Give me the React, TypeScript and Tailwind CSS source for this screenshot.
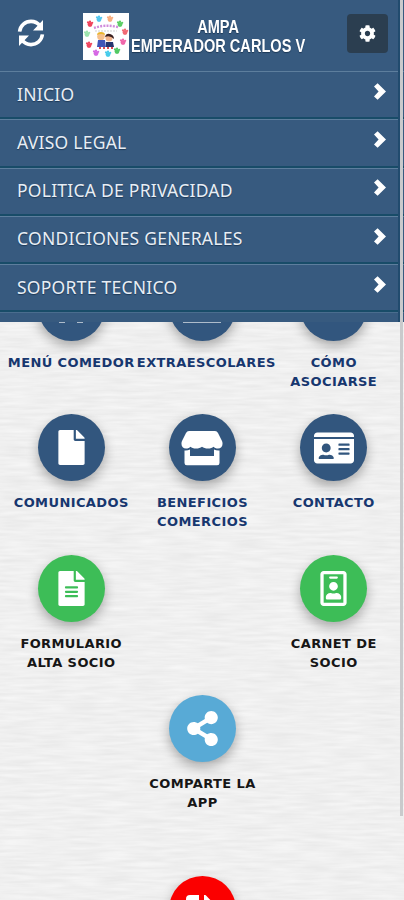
import type { ReactNode } from 'react';
import { FaFile, FaFileAlt, FaIdCard, FaRegIdBadge, FaShareAlt, FaCog } from 'react-icons/fa';

const menuItems = [
  'INICIO',
  'AVISO LEGAL',
  'POLITICA DE PRIVACIDAD',
  'CONDICIONES GENERALES',
  'SOPORTE TECNICO',
];

const hands = [
  { x: 16, y: 6, color: '#35bdec' },
  { x: 27, y: 6, color: '#f6a06a' },
  { x: 37, y: 11, color: '#42c64c' },
  { x: 42, y: 19, color: '#f0505c' },
  { x: 40, y: 29, color: '#ee4c9c' },
  { x: 34, y: 38, color: '#35c04a' },
  { x: 25, y: 41, color: '#28c4e8' },
  { x: 13, y: 40, color: '#cf4ee0' },
  { x: 6, y: 32, color: '#ee2844' },
  { x: 4, y: 21, color: '#8ce0a0' },
  { x: 7, y: 11, color: '#ee2340' },
];

const SchoolLogo = () => (
  <svg viewBox="0 0 46 47" className="h-[47px] w-[46px] shrink-0 bg-white">
    {hands.map((h) => (
      <g key={h.color + h.x} fill={h.color} opacity="0.85">
        <circle cx={h.x} cy={h.y + 0.5} r="2.4" />
        <circle cx={h.x - 2} cy={h.y - 1.6} r="1.1" />
        <circle cx={h.x} cy={h.y - 2.4} r="1.1" />
        <circle cx={h.x + 2.2} cy={h.y - 1.2} r="1.1" />
      </g>
    ))}
    <path d="M11 15q11-4 24-1" stroke="#b03fc4" strokeWidth="2.4" strokeDasharray="2 1.2" fill="none" opacity="0.6" />
    <path d="M12 18h22" stroke="#bbb" strokeWidth="0.7" strokeDasharray="2 1" />
    <circle cx="18" cy="23.5" r="3.8" fill="#f6c08c" />
    <path d="M14 22q0-3 4-3t4 3q-4-2-8 0z" fill="#e9b52c" />
    <path d="M15 27h7l1 7h-9z" fill="#4054b8" />
    <circle cx="26" cy="25" r="3.5" fill="#f2b48c" />
    <path d="M22 24q1-4 5-3t4 5q-4-4-9-2z" fill="#3a2020" />
    <path d="M23 29h7l1 5h-8z" fill="#26346e" />
    <path d="M16 34h2v2h-2zM20 34h2v2h-2zM24 34h2v2h-2zM28 34h2v2h-2z" fill="#dd4a55" />
  </svg>
);

const RefreshIcon = () => (
  <svg viewBox="0 0 28 28" className="h-7 w-7" fill="none" stroke="#fff" strokeWidth="3.6">
    <path d="M2.6 12.6C3.4 6 8.4 2.4 14 2.4c3.8 0 6.8 1.5 9 4.4" />
    <path d="M25.4 15.4C24.6 22 19.6 25.6 14 25.6c-3.8 0-6.8-1.5-9-4.4" />
    <path d="M26 1v10.5H16zM2 27V16.5h10z" fill="#fff" stroke="none" />
  </svg>
);

const ChevronIcon = () => (
  <svg viewBox="0 0 12 17" className="mb-[7px] h-[17px] w-3" fill="#fff">
    <path d="M3.6 0.3L12 8.5L3.6 16.7L0 13.4L4.6 8.5L0 3.6z" />
  </svg>
);

const StoreIcon = () => (
  <svg viewBox="0 0 42 36" className="h-9 w-[42px]" fill="#fff">
    <path d="M8 1h26q2 0 3 2l4 8c1.6 4-.5 7.5-4 7.5-2 0-3.5-.6-4.5-1.8-1.2 1.2-3 1.8-5.5 1.8s-4.4-.6-6-1.8c-1.6 1.2-3.5 1.8-6 1.8s-4.3-.6-5.5-1.8c-1 1.2-2.5 1.8-4.5 1.8-3.5 0-5.6-3.5-4-7.5l4-8q1-2 3-2z" />
    <path d="M3.5 20.5q3 .3 5.500-1V26h24v-6.5q2.5 1.3 5.5 1V33q0 2.3-2.3 2.3H5.8Q3.5 35.3 3.5 33z" />
  </svg>
);

const PaperTexture = () => (
  <svg className="pointer-events-none absolute inset-0 h-full w-full" aria-hidden="true">
    <filter id="paper" x="0" y="0" width="100%" height="100%" colorInterpolationFilters="sRGB">
      <feTurbulence type="fractalNoise" baseFrequency="0.03 0.3" numOctaves="2" seed="4" />
      <feColorMatrix values="0.07 0 0 0 0.904  0.07 0 0 0 0.904  0.07 0 0 0 0.904  0 0 0 0 1" />
    </filter>
    <rect width="100%" height="100%" filter="url(#paper)" />
  </svg>
);

interface TileProps {
  color: string;
  label: ReactNode;
  labelColor?: string;
  children?: ReactNode;
}

const Tile = ({ color, label, labelColor = 'text-[#17376f]', children }: TileProps) => (
  <div className="flex h-[140.5px] flex-col items-start">
    <div
      className={`flex h-[67px] w-[67px] shrink-0 items-center justify-center self-center rounded-full text-[35px] text-white shadow-[0_5px_12px_rgba(0,0,0,0.3)] ${color}`}
    >
      {children}
    </div>
    <div
      className={`mt-3 min-w-full whitespace-nowrap text-center font-['DejaVu_Sans',sans-serif] text-[13px] font-bold leading-[19px] tracking-[0.4px] ${labelColor}`}
    >
      {label}
    </div>
  </div>
);

const App = () => {
  return (
    <div className="relative h-[900px] w-[404px] overflow-hidden bg-[#f0f0f0] font-['Noto_Sans',sans-serif]">
      <PaperTexture />

      {/* Menu drawer, sits on top of the grid */}
      <header className="relative z-10 h-[322px] overflow-hidden bg-[#375a7f]">
        <div className="flex h-[71px] items-start pl-[17px] pr-4">
          <div className="mt-[19px]">
            <RefreshIcon />
          </div>
          <div className="ml-[38px] mt-[13px] flex">
            <SchoolLogo />
            <h1 className="ml-[2px] mt-[5px] w-[215px] origin-left scale-x-[0.81] whitespace-nowrap text-center font-['Liberation_Sans',sans-serif] text-[18px] font-bold leading-[19px] text-white [text-shadow:0_1px_1px_#1d3957]">
              AMPA
              <br />
              EMPERADOR CARLOS V
            </h1>
          </div>
          <button className="ml-auto mt-[14px] flex h-[39px] w-[41px] shrink-0 items-center justify-center rounded bg-[#2b3e50] text-[17px] text-white">
            <FaCog />
          </button>
        </div>
        <nav>
          {menuItems.map((item) => (
            <a
              key={item}
              className="flex h-[48.3px] items-center justify-between border-b-2 border-t border-b-[#184c68] border-t-[#5d7e9d] pl-[17px] pr-[18px] text-[17.5px] tracking-[0.25px] text-[#e8eef5] [text-shadow:0_1px_1px_#1d3957]"
            >
              <span className="mb-[2px]">{item}</span>
              <ChevronIcon />
            </a>
          ))}
          <div className="h-3 border-t border-[#4a6d8e]" />
        </nav>
      </header>

      <main className="relative -mt-[48.5px] grid grid-cols-3 pl-[5.6px] pr-[4.6px]">
        <Tile color="bg-[#32567e]" label="MENÚ COMEDOR">
          <div className="mt-[31px] flex gap-3">
            <span className="h-px w-[6px] bg-[#aebccb]" />
            <span className="h-px w-[6px] bg-[#aebccb]" />
          </div>
        </Tile>
        <Tile color="bg-[#32567e]" label="EXTRAESCOLARES">
          <span className="mt-[31px] h-px w-[38px] bg-[#aebccb]" />
        </Tile>
        <Tile color="bg-[#32567e]" label={<>CÓMO<br />ASOCIARSE</>} />

        <Tile color="bg-[#32567e]" label="COMUNICADOS">
          <FaFile />
        </Tile>
        <Tile color="bg-[#32567e]" label={<>BENEFICIOS<br />COMERCIOS</>}>
          <StoreIcon />
        </Tile>
        <Tile color="bg-[#32567e]" label="CONTACTO">
          <FaIdCard className="h-10 w-10" />
        </Tile>

        <Tile color="bg-[#3dbd57]" labelColor="text-[#161616]" label={<>FORMULARIO<br />ALTA SOCIO</>}>
          <FaFileAlt />
        </Tile>
        <div />
        <Tile color="bg-[#3dbd57]" labelColor="text-[#161616]" label={<>CARNET DE<br />SOCIO</>}>
          <FaRegIdBadge />
        </Tile>

        <div />
        <Tile color="bg-[#58aad6]" labelColor="text-[#161616]" label={<>COMPARTE LA<br />APP</>}>
          <FaShareAlt />
        </Tile>
        <div />

        <div />
        <div className="mt-10 flex justify-center">
          <div className="flex h-[67px] w-[67px] justify-center rounded-full bg-[#fb0000] pt-[19px] shadow-[0_5px_12px_rgba(0,0,0,0.3)]">
            <svg viewBox="0 0 32 32" className="h-8 w-8" fill="#fff">
              <path d="M4 0h9v5H6v20h6v4H4q-4 0-4-4V4q0-4 4-4zM18 0q1-.5 2 .5L33 14 20 27v-8H10V9h8z" />
            </svg>
          </div>
        </div>
      </main>

      {/* Scrollbar thumb */}
      <div className="absolute right-[1px] top-0 z-20 h-[816px] w-[3px] bg-[#c9cacc]" />
      <div className="absolute right-[4px] top-0 z-20 h-[322px] w-[2px] bg-[#214b6e]" />
    </div>
  );
};

export default App;
